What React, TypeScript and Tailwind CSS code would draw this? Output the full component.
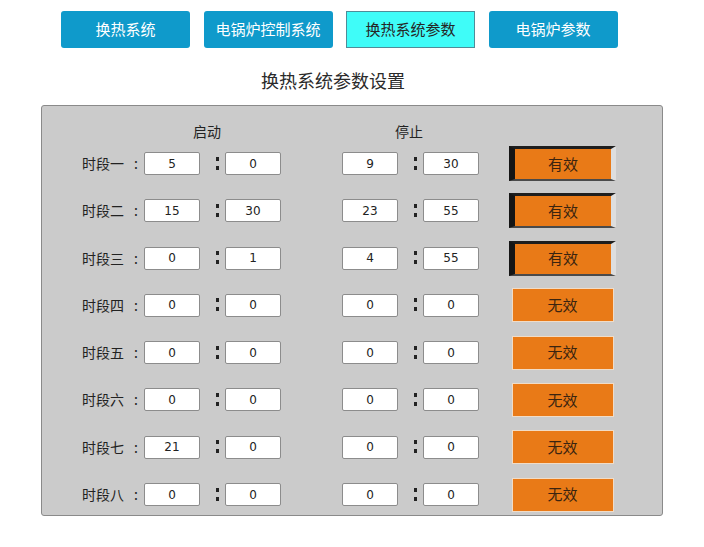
import React from 'react';

// one time slot: start hh:mm, stop hh:mm, enabled flag
interface Slot {
  name: string;
  startH: string;
  startM: string;
  stopH: string;
  stopM: string;
  active: boolean;
}

const slots: Slot[] = [
  { name: '时段一', startH: '5', startM: '0', stopH: '9', stopM: '30', active: true },
  { name: '时段二', startH: '15', startM: '30', stopH: '23', stopM: '55', active: true },
  { name: '时段三', startH: '0', startM: '1', stopH: '4', stopM: '55', active: true },
  { name: '时段四', startH: '0', startM: '0', stopH: '0', stopM: '0', active: false },
  { name: '时段五', startH: '0', startM: '0', stopH: '0', stopM: '0', active: false },
  { name: '时段六', startH: '0', startM: '0', stopH: '0', stopM: '0', active: false },
  { name: '时段七', startH: '21', startM: '0', stopH: '0', stopM: '0', active: false },
  { name: '时段八', startH: '0', startM: '0', stopH: '0', stopM: '0', active: false },
];

const tabs = ['换热系统', '电锅炉控制系统', '换热系统参数', '电锅炉参数'];

const cjk = { fontFamily: '"Noto Sans CJK SC", "Noto Sans", sans-serif' };

const Field: React.FC<{ value: string }> = ({ value }) => (
  <div
    className="w-[56px] h-[23px] bg-white border border-[#8c8c8c] rounded-[2px] flex items-center justify-center text-[12px] text-[#222]"
    style={{ fontFamily: '"DejaVu Sans", "Liberation Sans", sans-serif' }}
  >
    {value}
  </div>
);

const Colon: React.FC = () => (
  <div className="w-[25px] h-[23px] flex flex-col items-center justify-center gap-[5px] pl-[9px] pb-[1px]">
    <span className="block w-[3px] h-[4px] bg-[#222]"></span>
    <span className="block w-[3px] h-[4px] bg-[#222]"></span>
  </div>
);

const Toggle: React.FC<{ active: boolean }> = ({ active }) =>
  active ? (
    <div
      className="w-[107px] h-[35px] bg-[#e97a17] border-l-[6px] border-l-[#151515] border-t-[3px] border-t-[#1e1e1e] border-r-[5px] border-r-[#dedede] border-b-[2px] border-b-[#4a4a4a] flex items-center justify-center text-[15px] text-[#3a2410]"
      style={cjk}
    >
      有效
    </div>
  ) : (
    <div className="w-[107px] h-[35px] flex items-center justify-center">
      <div
        className="w-[102px] h-[34px] bg-[#e97a17] border border-[#f1dcc6] flex items-center justify-center text-[15px] text-[#3a2410]"
        style={cjk}
      >
        无效
      </div>
    </div>
  );

export default function App() {
  return (
    <div className="w-[704px] h-[547px] bg-white" style={cjk}>
      {/* top navigation */}
      <div className="flex gap-[13.5px] pl-[61px] pt-[11px]">
        {tabs.map((t, i) => (
          <div
            key={t}
            className={`w-[129px] h-[37px] rounded-[3px] flex items-center justify-center text-[15px] ${
              i === 2
                ? 'bg-[#3ffcf8] border border-[#4f8c98] text-[#262626] rounded-none'
                : 'bg-[#0f9acb] text-white'
            }`}
          >
            {t}
          </div>
        ))}
      </div>

      <div className="mt-[20px] ml-[261px] text-[18px] leading-[24px] text-[#2a2a2a]">
        换热系统参数设置
      </div>

      {/* parameter panel */}
      <div className="mt-[13px] ml-[41px] w-[622px] h-[411px] bg-[#cbcbcb] border border-[#8a8a8a] rounded-[3px]">
        <div className="flex h-[40px] pt-[15px] text-[14px] leading-[20px] text-[#222]">
          <span className="ml-[151px]">启动</span>
          <span className="ml-[174px]">停止</span>
        </div>
        <div className="flex flex-col gap-[12.3px]">
          {slots.map((s) => (
            <div key={s.name} className="flex items-center h-[35px] pl-[40px]">
              <div className="w-[62px] flex items-center text-[14px] text-[#222]">
                <span>{s.name}</span>
                <span className="ml-[10px]">:</span>
              </div>
              <Field value={s.startH} />
              <Colon />
              <Field value={s.startM} />
              <div className="w-[61px]"></div>
              <Field value={s.stopH} />
              <Colon />
              <Field value={s.stopM} />
              <div className="w-[30px]"></div>
              <Toggle active={s.active} />
            </div>
          ))}
        </div>
      </div>
    </div>
  );
}
